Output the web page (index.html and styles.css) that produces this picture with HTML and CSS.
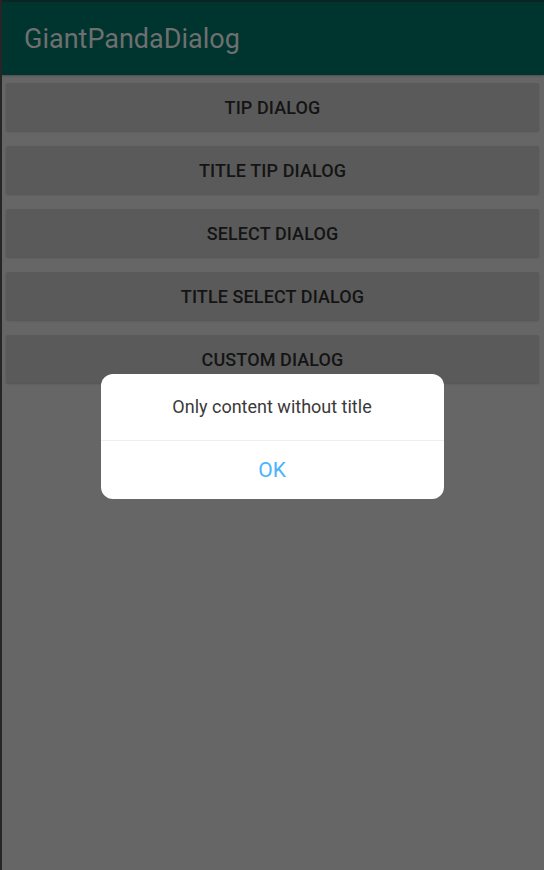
FILE: index.html
```html
<!DOCTYPE html>
<html>
<head>
<meta charset="utf-8">
<link rel="stylesheet" href="styles.css">
</head>
<body>
<div class="screen">
  <header class="appbar"><span class="title">GiantPandaDialog</span></header>
  <main class="list">
    <div class="btn">TIP DIALOG</div>
    <div class="btn">TITLE TIP DIALOG</div>
    <div class="btn">SELECT DIALOG</div>
    <div class="btn">TITLE SELECT DIALOG</div>
    <div class="btn">CUSTOM DIALOG</div>
  </main>
</div>
<div class="overlay">
  <div class="dialog">
    <div class="dialog-content">Only content without title</div>
    <div class="dialog-action">OK</div>
  </div>
</div>
</body>
</html>
```
FILE: styles.css
```css
html, body {
  margin: 0;
  padding: 0;
  height: 100%;
}
body {
  background: #666666;
  font-family: Roboto, "Liberation Sans", sans-serif;
  border-left: 2px solid #262626;
  box-sizing: border-box;
}
.screen {
  display: flex;
  flex-direction: column;
}
.appbar {
  height: 75px;
  box-sizing: border-box;
  background: #00352f;
  border-top: 2px solid #0b2622;
  display: flex;
  align-items: center;
  padding-left: 22px;
  box-shadow: 0 1px 2px rgba(0,0,0,0.25);
}
.title {
  font-size: 27px;
  color: #6f6f6f;
  margin-top: 1px;
}
.list {
  display: flex;
  flex-direction: column;
  gap: 15px;
  padding: 8px 5px 0 4px;
}
.btn {
  height: 48px;
  background: #5a5a5a;
  border-radius: 2px;
  box-shadow: 0 1px 2px rgba(0,0,0,0.18);
  display: flex;
  align-items: center;
  justify-content: center;
  font-size: 18px;
  font-weight: 500;
  color: #141414;
  letter-spacing: 0.1px;
}
.overlay {
  position: fixed;
  inset: 0;
  display: flex;
  align-items: center;
  justify-content: center;
}
.dialog {
  width: 343px;
  background: #ffffff;
  border-radius: 12px;
  display: flex;
  flex-direction: column;
  margin-top: 2px;
}
.dialog-content {
  height: 66px;
  display: flex;
  align-items: center;
  justify-content: center;
  font-size: 18px;
  color: #3a3a3a;
  border-bottom: 1px solid #efefef;
}
.dialog-action {
  height: 58px;
  display: flex;
  align-items: center;
  justify-content: center;
  font-size: 21px;
  color: #4cb3ff;
}
```
